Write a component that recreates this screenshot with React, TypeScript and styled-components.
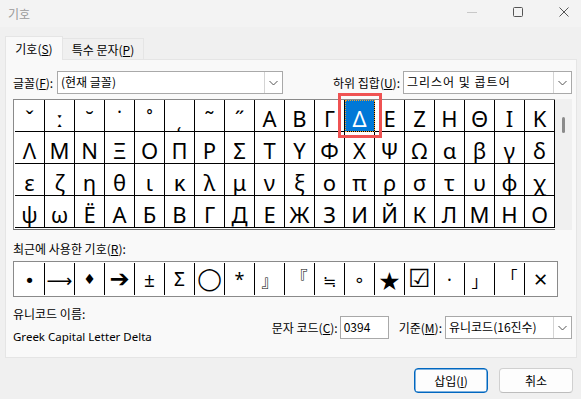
import React from "react";
import styled, { createGlobalStyle } from "styled-components";

const GlobalStyle = createGlobalStyle`
  html, body { margin: 0; padding: 0; }
  body {
    width: 581px; height: 399px; overflow: hidden;
    background: #f0f0f0;
    font-family: "Noto Sans CJK KR", "Noto Sans", sans-serif;
    font-size: 12px; color: #000;
  }
  #root { width: 581px; height: 399px; }
`;

const Window = styled.div`
  width: 581px; height: 399px; display: flex; flex-direction: column;
  background: #f0f0f0; overflow: hidden;
`;
const TitleBar = styled.div`
  height: 27px; flex: none; display: flex; align-items: center; justify-content: space-between;
  padding-left: 8px; background: #f3f3f3;
`;
const Title = styled.span`color: #9a9a9a; font-size: 12px; line-height: 16px;`;
const Controls = styled.div`display: flex; height: 100%; margin-right: -6px;`;
const CtrlButton = styled.div`width: 46px; display: flex; align-items: center; justify-content: center; padding-bottom: 4px;`;

const Body = styled.div`padding: 9px 5px 0 5px; display: flex; flex-direction: column;`;
const TabRow = styled.div`display: flex; align-items: flex-end; height: 23px;`;
const Tab = styled.div<{ $active?: boolean }>`
  position: relative; z-index: ${(p) => (p.$active ? 2 : 1)};
  box-sizing: border-box;
  height: ${(p) => (p.$active ? "24px" : "21px")};
  margin-bottom: ${(p) => (p.$active ? "-1px" : "0")};
  margin-left: ${(p) => (p.$active ? "0" : "-1px")};
  width: ${(p) => (p.$active ? "58px" : "82px")};
  border: 1px solid #e5e5e5; border-bottom: none;
  background: ${(p) => (p.$active ? "#f9f9f9" : "#f0f0f0")};
  display: flex; align-items: center; justify-content: center;
  padding-top: ${(p) => (p.$active ? "0" : "1px")};
  font-size: 12px; line-height: 16px;
`;
const Panel = styled.div`
  box-sizing: border-box; width: 572px; height: 299px;
  border: 1px solid #e5e5e5; background: #f9f9f9;
  padding: 11px 4px 0 7px; display: flex; flex-direction: column;
`;
const Row = styled.div`display: flex; align-items: center; height: 23px;`;
const Label = styled.span<{ $w?: number }>`
  line-height: 16px; white-space: nowrap;
  ${(p) => (p.$w ? `width: ${p.$w}px; flex: none;` : "")}
`;
const RightGroup = styled.div`margin-left: auto; display: flex; align-items: center; gap: 3px;`;
const Combo = styled.div<{ $w: number; $ml?: number }>`
  box-sizing: border-box; width: ${(p) => p.$w}px; height: 23px;
  margin-left: ${(p) => p.$ml ?? 0}px;
  border: 1px solid #a9a9a9; background: #fff;
  display: flex; align-items: stretch;
`;
const ComboText = styled.div<{ $ws?: number }>`
  flex: 1; padding-left: 3px; line-height: 20px; font-size: 12px; white-space: nowrap;
  letter-spacing: ${(p) => p.$ws ?? 0}px;
`;
const ComboArrow = styled.div`
  width: 17px; flex: none; border-left: 1px solid #d4d4d4;
  display: flex; align-items: center; justify-content: center;
`;

const GridArea = styled.div`position: relative; display: flex; margin-top: 5px;`;
const CharGrid = styled.div`
  box-sizing: border-box; width: 542px;
  border-top: 1px solid #8a8a8a; border-left: 1px solid #8a8a8a; border-bottom: 1px solid #6e6e6e;
  padding: 0 0 1px 1px; background: #fff;
  display: grid; grid-template-columns: repeat(18, 30px); grid-auto-rows: 32px;
`;
const Cell = styled.div<{ $sel?: boolean }>`
  box-sizing: border-box; height: 32px;
  border-right: 1px solid #000; border-bottom: 1px solid #000;
  text-align: center; line-height: 37px;
  font-family: "Noto Sans", "DejaVu Sans", sans-serif; font-size: 22px;
  color: ${(p) => (p.$sel ? "#fff" : "#000")};
  background: ${(p) => (p.$sel ? "#0078d7" : "#fff")};
  ${(p) => (p.$sel ? "outline: 1px dotted #f0a030; outline-offset: -1px;" : "")}
  overflow: visible;
`;
const ScrollTrack = styled.div`width: 17px; background: #f0f0f0; display: flex; justify-content: center;`;
const ScrollThumb = styled.div`width: 3px; height: 16px; margin: 18px 0 0 0; background: #8b8b8b; border-radius: 2px;`;
const Highlight = styled.div`
  position: absolute; left: 325px; top: -6px; width: 44px; height: 45px;
  box-sizing: border-box; border: 3px solid #ef5252; pointer-events: none;
`;

const RecentLabel = styled.div`margin-top: 11px; line-height: 16px;`;
const RecentRow = styled.div`
  box-sizing: border-box; width: 545px; margin-top: 4px;
  border: 1px solid #8a8a8a; padding: 1px; background: #fff;
  display: grid; grid-template-columns: repeat(17, 30px) 1fr; grid-auto-rows: 32px;
`;
const RecentCell = styled.div<{ $last?: boolean }>`
  box-sizing: border-box; border-right: ${(p) => (p.$last ? "none" : "1px solid #000")};
  display: flex; align-items: center; justify-content: center;
`;
const Glyph = styled.span<{ $size: number; $dy: number; $font?: string }>`
  font-family: ${(p) => p.$font ?? `"DejaVu Sans", "Noto Sans", "Noto Sans CJK KR", sans-serif`};
  font-size: ${(p) => p.$size}px; line-height: 1;
  transform: translateY(${(p) => p.$dy}px);
`;

const Bottom = styled.div`display: flex; margin-top: 9px;`;
const InfoCol = styled.div`display: flex; flex-direction: column;`;
const InfoName = styled.div`margin-top: 7px; line-height: 16px; font-size: 11.5px; font-family: "Noto Sans", "Noto Sans CJK KR", sans-serif;`;
const CodeGroup = styled.div`margin-left: auto; margin-top: 10px; display: flex; align-items: center; height: 23px;`;
const TextInput = styled.div`
  box-sizing: border-box; width: 49px; height: 23px; margin: 0 10px 0 2px;
  border: 1px solid #a9a9a9; background: #fff; padding-left: 3px; line-height: 20px;
`;

const ButtonRow = styled.div`display: flex; justify-content: flex-end; gap: 11px; padding-right: 3px; margin-top: 10px;`;
const Button = styled.div<{ $primary?: boolean }>`
  box-sizing: border-box; width: 74px; height: 25px; border-radius: 4px;
  background: #fdfdfd;
  border: 1px solid ${(p) => (p.$primary ? "#0067c0" : "#d0d0d0")};
  ${(p) => (p.$primary ? "box-shadow: inset 0 0 0 0.5px #0067c0;" : "border-bottom-color: #bdbdbd;")}
  display: flex; align-items: center; justify-content: center; line-height: 16px;
`;

const Chevron = () => (
  <svg width="9" height="6" viewBox="0 0 9 6">
    <polyline points="0.5,1 4.5,5 8.5,1" fill="none" stroke="#555" strokeWidth="1" />
  </svg>
);

const rows: string[][] = [
  ["ˇ", "ː", "˘", "˙", "˚", "˛", "˜", "˝", "Α", "Β", "Γ", "Δ", "Ε", "Ζ", "Η", "Θ", "Ι", "Κ"],
  ["Λ", "Μ", "Ν", "Ξ", "Ο", "Π", "Ρ", "Σ", "Τ", "Υ", "Φ", "Χ", "Ψ", "Ω", "α", "β", "γ", "δ"],
  ["ε", "ζ", "η", "θ", "ι", "κ", "λ", "μ", "ν", "ξ", "ο", "π", "ρ", "σ", "τ", "υ", "φ", "χ"],
  ["ψ", "ω", "Ё", "А", "Б", "В", "Г", "Д", "Е", "Ж", "З", "И", "Й", "К", "Л", "М", "Н", "О"],
];

type R = { c: string; s: number; dy: number; f?: string };
const NS = `"Noto Sans", "DejaVu Sans", sans-serif`;
const CJK = `"Noto Sans CJK KR", sans-serif`;
const recent: R[] = [
  { c: "•", s: 18, dy: 2 },
  { c: "⟶", s: 18, dy: 2 },
  { c: "♦", s: 14, dy: 0 },
  { c: "➔", s: 24, dy: 0 },
  { c: "±", s: 19, dy: 1, f: NS },
  { c: "Σ", s: 19, dy: 0, f: NS },
  { c: "◯", s: 22, dy: 0 },
  { c: "*", s: 18, dy: 0, f: NS },
  { c: "』", s: 16, dy: 1, f: CJK },
  { c: "『", s: 16, dy: -3, f: CJK },
  { c: "≒", s: 16, dy: 3 },
  { c: "∘", s: 18, dy: 1 },
  { c: "★", s: 25, dy: 2 },
  { c: "☑", s: 25, dy: -1 },
  { c: "·", s: 18, dy: 0, f: NS },
  { c: "」", s: 16, dy: 1, f: CJK },
  { c: "「", s: 16, dy: -3, f: CJK },
  { c: "×", s: 24, dy: 0, f: NS },
];

export default function App() {
  return (
    <Window>
      <GlobalStyle />
      <TitleBar>
        <Title>기호</Title>
        <Controls>
          <CtrlButton>
            <svg width="10" height="10" viewBox="0 0 10 10"><line x1="0" y1="5.5" x2="10" y2="5.5" stroke="#c8c8c8" /></svg>
          </CtrlButton>
          <CtrlButton>
            <svg width="10" height="10" viewBox="0 0 10 10"><rect x="0.5" y="0.5" width="9" height="9" rx="1" fill="none" stroke="#555" /></svg>
          </CtrlButton>
          <CtrlButton>
            <svg width="10" height="10" viewBox="0 0 10 10"><path d="M0.5 0.5L9.5 9.5M9.5 0.5L0.5 9.5" stroke="#555" /></svg>
          </CtrlButton>
        </Controls>
      </TitleBar>
      <Body>
        <TabRow>
          <Tab $active>기호(<u>S</u>)</Tab>
          <Tab>특수 문자(<u>P</u>)</Tab>
        </TabRow>
        <Panel>
          <Row>
            <Label $w={44}>글꼴(<u>F</u>):</Label>
            <Combo $w={226}>
              <ComboText>(현재 글꼴)</ComboText>
              <ComboArrow><Chevron /></ComboArrow>
            </Combo>
            <RightGroup>
              <Label>하위 집합(<u>U</u>):</Label>
              <Combo $w={169}>
                <ComboText $ws={1}>그리스어 및 콥트어</ComboText>
                <ComboArrow><Chevron /></ComboArrow>
              </Combo>
            </RightGroup>
          </Row>
          <GridArea>
            <CharGrid>
              {rows.flatMap((r, ri) =>
                r.map((c, ci) => (
                  <Cell key={`${ri}-${ci}`} $sel={ri === 0 && ci === 11}>{c}</Cell>
                ))
              )}
            </CharGrid>
            <ScrollTrack><ScrollThumb /></ScrollTrack>
            <Highlight />
          </GridArea>
          <RecentLabel>최근에 사용한 기호(<u>R</u>):</RecentLabel>
          <RecentRow>
            {recent.map((g, i) => (
              <RecentCell key={i} $last={i === recent.length - 1}>
                <Glyph $size={g.s} $dy={g.dy} $font={g.f}>{g.c}</Glyph>
              </RecentCell>
            ))}
          </RecentRow>
          <Bottom>
            <InfoCol>
              <Label>유니코드 이름:</Label>
              <InfoName>Greek Capital Letter Delta</InfoName>
            </InfoCol>
            <CodeGroup>
              <Label>문자 코드(<u>C</u>):</Label>
              <TextInput>0394</TextInput>
              <Label>기준(<u>M</u>):</Label>
              <Combo $w={127} $ml={3}>
                <ComboText>유니코드(16진수)</ComboText>
                <ComboArrow><Chevron /></ComboArrow>
              </Combo>
            </CodeGroup>
          </Bottom>
        </Panel>
        <ButtonRow>
          <Button $primary>삽입(<u>I</u>)</Button>
          <Button>취소</Button>
        </ButtonRow>
      </Body>
    </Window>
  );
}
